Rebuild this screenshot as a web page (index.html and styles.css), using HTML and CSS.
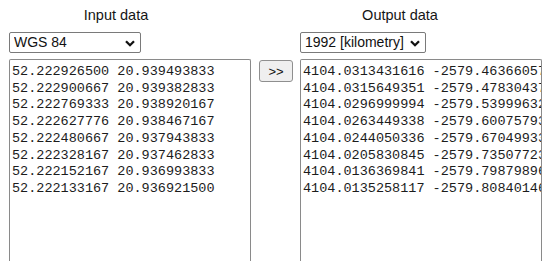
FILE: index.html
```html
<!DOCTYPE html>
<html>
<head>
<meta charset="utf-8">
<link rel="stylesheet" href="styles.css">
</head>
<body>
<div class="conv">
  <div class="head head-in">Input data</div>
  <div class="spacer"></div>
  <div class="head head-out">Output data</div>

  <div class="sel-wrap sel-in">
    <select class="sel"><option>WGS 84</option></select>
    <svg class="chev" width="10" height="7" viewBox="0 0 10 7"><path d="M1 1.2 L5 5.2 L9 1.2" fill="none" stroke="#111" stroke-width="2.3"/></svg>
  </div>
  <div class="spacer"></div>
  <div class="sel-wrap sel-out">
    <select class="sel"><option>1992 [kilometry]</option></select>
    <svg class="chev" width="10" height="7" viewBox="0 0 10 7"><path d="M1 1.2 L5 5.2 L9 1.2" fill="none" stroke="#111" stroke-width="2.3"/></svg>
  </div>

  <textarea class="data" wrap="off" spellcheck="false">52.222926500 20.939493833
52.222900667 20.939382833
52.222769333 20.938920167
52.222627776 20.938467167
52.222480667 20.937943833
52.222328167 20.937462833
52.222152167 20.936993833
52.222133167 20.936921500</textarea>
  <div class="btn-cell"><button class="go">&gt;&gt;</button></div>
  <textarea class="data" wrap="off" spellcheck="false">4104.0313431616 -2579.4636605721
4104.0315649351 -2579.4783043712
4104.0296999994 -2579.5399963218
4104.0263449338 -2579.6007579314
4104.0244050336 -2579.6704993327
4104.0205830845 -2579.7350772386
4104.0136369841 -2579.7987989621
4104.0135258117 -2579.8084014652</textarea>
</div>
</body>
</html>
```
FILE: styles.css
```css
html, body {
  margin: 0;
  padding: 0;
  background: #fff;
}

.conv {
  display: grid;
  grid-template-columns: 242px 34px 242px;
  grid-template-rows: 26px 21px 202px;
  column-gap: 8px;
  row-gap: 6px;
  padding-left: 9px;
  width: 534px;
  font-family: "Liberation Sans", Arial, sans-serif;
  color: #111;
}

.conv > :nth-child(3n) { margin-left: -1px; }

.head {
  font-size: 14.5px;
  line-height: 30px;
  height: 26px;
  text-align: center;
  color: #151515;
}

.head-in { width: 214px; }
.head-out { width: 200px; }

.sel-wrap {
  position: relative;
  height: 21px;
}

.sel-in { width: 132px; }
.sel-out { width: 126px; margin-left: 2px; }

.sel {
  appearance: none;
  -webkit-appearance: none;
  box-sizing: border-box;
  width: 100%;
  height: 21px;
  margin: 0;
  padding: 0 0 0 4px;
  border: 1px solid #7a7a7a;
  border-radius: 2px;
  background: #fff;
  font-family: "Liberation Sans", Arial, sans-serif;
  font-size: 14px;
  line-height: 19px;
  color: #111;
}

.chev {
  position: absolute;
  right: 6px;
  top: 8px;
  pointer-events: none;
}

.data {
  box-sizing: border-box;
  width: 242px;
  height: 202px;
  margin: 0;
  padding: 4px 2px 0 2px;
  border: 1px solid #8a8a8a;
  border-bottom: 0;
  border-radius: 2px 2px 0 0;
  resize: none;
  overflow: hidden;
  white-space: pre;
  font-family: "Liberation Mono", "DejaVu Sans Mono", monospace;
  font-size: 13.5px;
  line-height: 16.7px;
  color: #1c1c1c;
  background: #fff;
  outline: none;
}

.btn-cell {
  padding-top: 1px;
}

.go {
  box-sizing: border-box;
  width: 34px;
  height: 22px;
  margin: 0;
  padding: 0;
  border: 1px solid #8f8f8f;
  border-radius: 3px;
  background: #efefef;
  font-family: "Liberation Sans", Arial, sans-serif;
  font-size: 13px;
  color: #111;
}
```
